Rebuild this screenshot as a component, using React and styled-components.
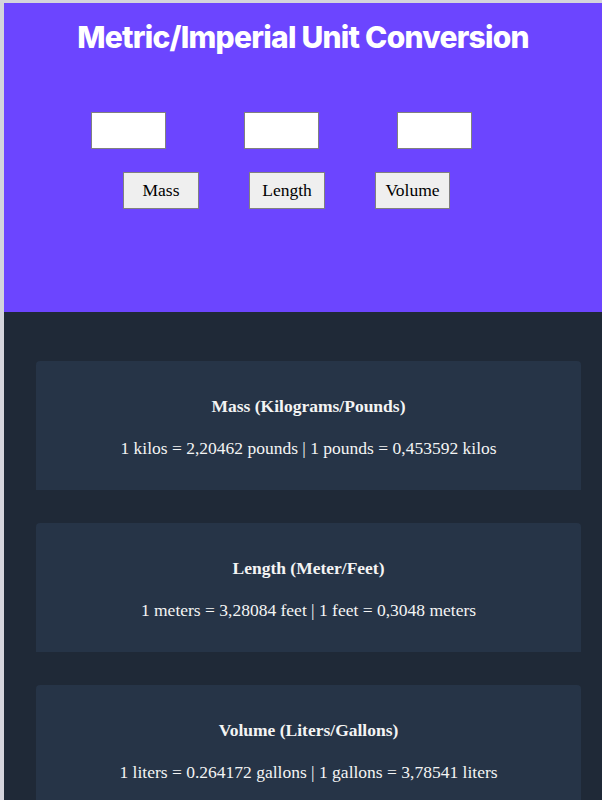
import styled, { createGlobalStyle } from 'styled-components'

const GlobalStyle = createGlobalStyle`
  html, body {
    margin: 0;
    padding: 0;
    background: #1f2937;
  }
  #root {
    border-top: 3px solid #d4d4dc;
    border-left: 4px solid #d4d4dc;
    min-height: 800px;
    background: #1f2937;
  }
`

const Header = styled.header`
  background-color: #6c45ff;
  height: 309px;
  display: flex;
  flex-direction: column;
`

const Title = styled.h1`
  margin: 15px 0 0;
  font-family: Inter, "Liberation Sans", sans-serif;
  font-weight: 800;
  font-size: 30px;
  letter-spacing: -0.75px;
  line-height: 38px;
  color: #ffffff;
  text-align: center;
`

const InputRow = styled.div`
  display: flex;
  gap: 78px;
  margin: 56px 0 0 87px;
`

const Field = styled.input`
  width: 75px;
  height: 37px;
  box-sizing: border-box;
  background: #ffffff;
  border: 1px solid #808080;
  padding: 0;
`

const ButtonRow = styled.div`
  display: flex;
  gap: 50px;
  margin: 23px 0 0 119px;
`

const UnitButton = styled.button`
  width: ${({ $w }) => $w}px;
  height: 37px;
  box-sizing: border-box;
  background: #efefef;
  border: 1px solid #808080;
  border-radius: 0;
  font-family: "Liberation Serif", serif;
  font-size: 17.5px;
  color: #000;
  padding: 0;
`

const Results = styled.main`
  display: flex;
  flex-direction: column;
  gap: 33px;
  padding: 49px 21px 40px 32px;
`

const Card = styled.section`
  background-color: #263447;
  border-radius: 4px 4px 0 0;
  height: 129px;
  box-sizing: border-box;
  padding-top: 35px;
  display: flex;
  flex-direction: column;
  align-items: center;
  font-family: "Liberation Serif", serif;
  color: #f4f4f4;
`

const CardTitle = styled.h3`
  margin: 0;
  font-size: 17.5px;
  font-weight: 700;
  line-height: 21px;
`

const CardText = styled.p`
  margin: 21px 0 0;
  font-size: 17.5px;
  line-height: 21px;
`

const conversions = [
  { title: 'Mass (Kilograms/Pounds)', text: '1 kilos = 2,20462 pounds | 1 pounds = 0,453592 kilos' },
  { title: 'Length (Meter/Feet)', text: '1 meters = 3,28084 feet | 1 feet = 0,3048 meters' },
  { title: 'Volume (Liters/Gallons)', text: '1 liters = 0.264172 gallons | 1 gallons = 3,78541 liters' },
]

const App = () => (
  <>
    <GlobalStyle />
    <Header>
      <Title>Metric/Imperial Unit Conversion</Title>
      <InputRow>
        <Field type="text" />
        <Field type="text" />
        <Field type="text" />
      </InputRow>
      <ButtonRow>
        <UnitButton $w={76}>Mass</UnitButton>
        <UnitButton $w={76}>Length</UnitButton>
        <UnitButton $w={75}>Volume</UnitButton>
      </ButtonRow>
    </Header>
    <Results>
      {conversions.map((c) => (
        <Card key={c.title}>
          <CardTitle>{c.title}</CardTitle>
          <CardText>{c.text}</CardText>
        </Card>
      ))}
    </Results>
  </>
)

export default App
